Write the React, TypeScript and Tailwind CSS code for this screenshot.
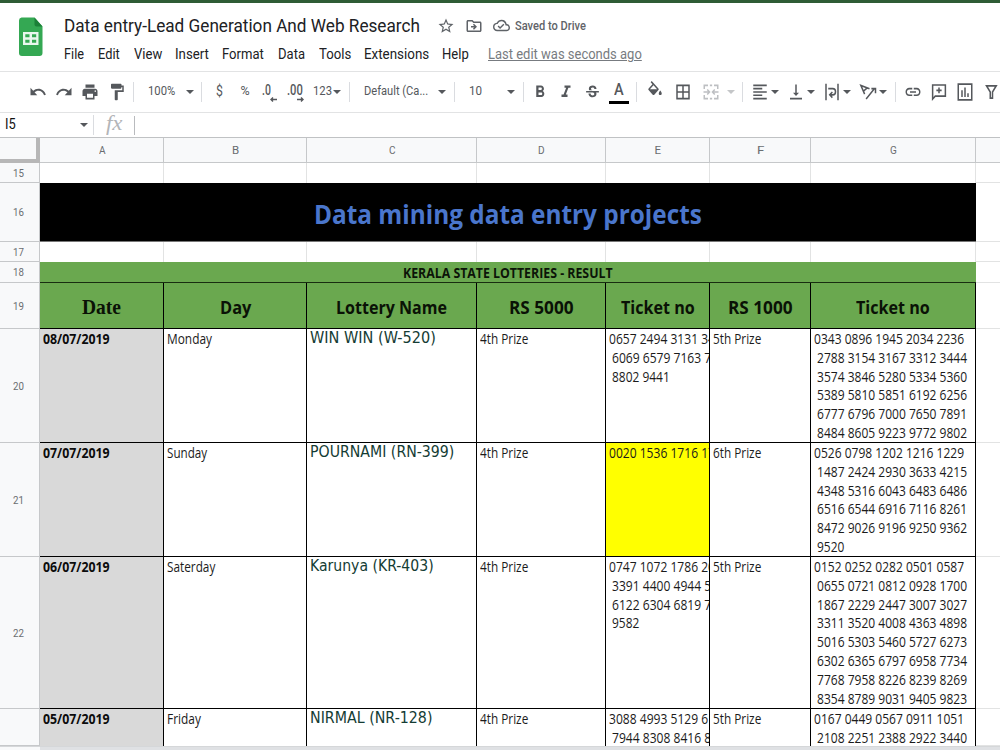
import { useLayoutEffect, useRef, useState, type ReactNode } from "react";
import {
  MdUndo, MdRedo, MdPrint, MdFormatPaint, MdFormatBold, MdFormatItalic, MdStrikethroughS,
  MdBorderAll, MdFormatAlignLeft, MdVerticalAlignBottom, MdInsertLink, MdStarBorder,
  MdOutlineDriveFileMove, MdOutlineCloudDone,
} from "react-icons/md";

/* Text condensed or widened horizontally to an exact width. */
function Fit({ w, children, className = "" }: { w: number; children: string; className?: string }) {
  const ref = useRef<HTMLSpanElement>(null);
  const [k, setK] = useState(1);
  useLayoutEffect(() => {
    if (ref.current) setK(w / ref.current.offsetWidth);
  }, [w, children]);
  return (
    <span className={`block shrink-0 ${className}`} style={{ width: w }}>
      <span ref={ref} className="block w-max origin-left whitespace-pre" style={{ transform: `scaleX(${k})` }}>
        {children}
      </span>
    </span>
  );
}

const Caret = ({ className = "" }: { className?: string }) => (
  <svg viewBox="0 0 8 4" className={`h-[4px] w-[8px] shrink-0 ${className}`} fill="currentColor">
    <path d="M0 0h8L4 4z" />
  </svg>
);
const Sep = ({ className = "" }: { className?: string }) => (
  <span className={`h-5 w-px shrink-0 bg-[#dadce0] ${className}`} />
);
const Ic = ({ className = "", children }: { className?: string; children: ReactNode }) => (
  <span className={`flex h-[18px] w-[18px] shrink-0 scale-y-110 items-center justify-center text-[18px] ${className}`}>
    {children}
  </span>
);
const Draw = ({ d, stroke = false }: { d: string; stroke?: boolean }) => (
  <svg viewBox="0 0 24 24" className="h-[18px] w-[18px]" fill={stroke ? "none" : "currentColor"} stroke={stroke ? "currentColor" : "none"} strokeWidth="2">
    <path d={d} />
  </svg>
);

function TitleBar() {
  const menus: [string, number, string][] = [
    ["File", 20, ""], ["Edit", 22, "ml-[14px]"], ["View", 28, "ml-[14px]"], ["Insert", 34, "ml-[13px]"],
    ["Format", 42, "ml-[13px]"], ["Data", 27, "ml-[14px]"], ["Tools", 32, "ml-[14px]"],
    ["Extensions", 65, "ml-[13px]"], ["Help", 27, "ml-[13px]"],
  ];
  return (
    <header className="flex h-[72px] border-b border-t-[3px] border-b-[#e2e3e4] border-t-[#2f5c35] bg-white">
      <svg viewBox="0 0 25 39" preserveAspectRatio="none" className="ml-[18px] mt-[14px] h-[39px] w-[25px] shrink-0">
        <path d="M3.500 .5h13l8 9v26.500a3 3 0 0 1-3 3H4a3 3 0 0 1-3-3V3.500a3 3 0 0 1 2.500-3z" fill="#34a853" />
        <path d="M16.500.5v7a2 2 0 0 0 2 2h6z" fill="#1b8038" />
        <path fillRule="evenodd" fill="#e9f7ee" d="M5 15h15.500v13H5zM7.300 17.300v3h4.200v-3zM14 17.300v3h4.200v-3zM7.300 22.700v3h4.200v-3zM14 22.700v3h4.200v-3z" />
      </svg>
      <div className="ml-[21px] flex flex-col">
        <div className="flex h-[43px] items-center pt-[2px] text-[#5f6368]">
          <Fit w={356} className="text-[18px] leading-[24px] text-[#202124] [font-family:Roboto,sans-serif]">Data entry-Lead Generation And Web Research</Fit>
          <MdStarBorder className="ml-[17px] h-[18px] w-[18px] shrink-0" />
          <MdOutlineDriveFileMove className="ml-[10px] h-[18px] w-[18px] shrink-0" />
          <MdOutlineCloudDone className="ml-[10px] h-[17px] w-[17px] shrink-0" />
          <Fit w={71} className="ml-[5px] text-[12.500px] font-medium leading-[16px] text-[#5f6368] [font-family:Roboto,sans-serif]">Saved to Drive</Fit>
        </div>
        <div className="flex h-[16px] items-center text-[14px] leading-[16px] text-[#202124] [font-family:Roboto,sans-serif]">
          {menus.map(([t, w, m]) => <Fit key={t} w={w} className={m}>{t}</Fit>)}
          <Fit w={154} className="ml-[19px] text-[#777b80] underline">Last edit was seconds ago</Fit>
        </div>
      </div>
    </header>
  );
}

function Toolbar() {
  return (
    <div className="flex h-[41px] items-center overflow-hidden border-b border-[#e2e3e4] bg-white text-[12.500px] leading-[16px] text-[#55585c] [font-family:Roboto,sans-serif]">
      <Ic className="ml-[29px]"><MdUndo /></Ic>
      <Ic className="ml-[8px]"><MdRedo /></Ic>
      <Ic className="ml-[8px]"><MdPrint /></Ic>
      <Ic className="ml-[9px]"><MdFormatPaint /></Ic>
      <Sep className="ml-[7px]" />
      <Fit w={27} className="ml-[14px] mt-[-2px]">100%</Fit>
      <Caret className="ml-[11px]" />
      <Sep className="ml-[7px]" />
      <Fit w={7} className="ml-[13.500px] mt-[-2px] text-[14px]">$</Fit>
      <Fit w={9} className="ml-[18px] mt-[-2px]">%</Fit>
      <span className="ml-[12.500px] flex h-[18px] w-[15px] shrink-0 flex-col">
        <Fit w={9} className="text-[14px] font-medium leading-[15px]">.0</Fit>
        <svg viewBox="0 0 7 5" className="mt-[-1px] h-[5px] w-[7px] shrink-0 self-end" stroke="currentColor" fill="none"><path d="M7 2.500H1.500M3 .5l-2 2 2 2" strokeWidth="1.400" /></svg>
      </span>
      <span className="ml-[10px] flex h-[18px] w-[17px] shrink-0 flex-col">
        <Fit w={16} className="text-[14px] font-medium leading-[15px]">.00</Fit>
        <svg viewBox="0 0 7 5" className="mt-[-1px] h-[5px] w-[7px] shrink-0 self-end" stroke="currentColor" fill="none"><path d="M0 2.500h5.500M4 .5l2 2-2 2" strokeWidth="1.400" /></svg>
      </span>
      <Fit w={19} className="ml-[9px] mt-[-2px]">123</Fit>
      <Caret className="ml-px" />
      <Sep className="ml-[8px]" />
      <Fit w={64} className="ml-[14px] mt-[-2px]">Default (Ca...</Fit>
      <Caret className="ml-[10px]" />
      <Sep className="ml-[8px]" />
      <Fit w={13} className="ml-[14px] mt-[-2px]">10</Fit>
      <Caret className="ml-[25px]" />
      <Sep className="ml-[8px]" />
      <Ic className="ml-[7px]"><MdFormatBold className="h-[20px] w-[20px]" /></Ic>
      <Ic className="ml-[8px]"><MdFormatItalic className="h-[20px] w-[20px]" /></Ic>
      <Ic className="ml-[8px]"><MdStrikethroughS className="h-[17px] w-[17px]" /></Ic>
      <span className="ml-[8px] flex w-[20px] shrink-0 flex-col items-center border-b-[3px] border-black pb-[2px]">
        <Fit w={10} className="text-[16px] font-medium leading-[18px]">A</Fit>
      </span>
      <Sep className="ml-[7px]" />
      <Ic className="ml-[9px] pb-[2px]"><Draw d="M16.560 8.940L7.620 0 6.210 1.410l2.380 2.380-5.150 5.150c-.59.59-.59 1.540 0 2.120l5.500 5.500c.29.29.68.44 1.060.44s.77-.15 1.060-.44l5.500-5.500c.59-.58.59-1.530 0-2.120zM5.210 10L10 5.210 14.790 10zM19 11.500s-2 2.170-2 3.500c0 1.100.9 2 2 2s2-.9 2-2c0-1.330-2-3.500-2-3.500z" /></Ic>
      <Ic className="ml-[10px]"><MdBorderAll /></Ic>
      <Ic className="ml-[10px] text-[#bdbfc2]"><Draw stroke d="M8 4H3v4.500M3 15.500V20h5M16 4h5v4.500M21 15.500V20h-5M10.500 4h3M10.500 20h3M2 12h7M7 9l3 3-3 3M22 12h-7M17 9l-3 3 3 3" /></Ic>
      <Caret className="ml-[7px] text-[#c4c6c8]" />
      <Sep className="ml-[7px]" />
      <Ic className="ml-[8px]"><MdFormatAlignLeft /></Ic>
      <Caret className="ml-[2px]" />
      <Ic className="ml-[8px]"><MdVerticalAlignBottom /></Ic>
      <Caret className="ml-[2px]" />
      <Ic className="ml-[8px]"><Draw stroke d="M4 2v20M20 2v20M7 8h6a3.700 3.700 0 0 1 0 7.400h-3M12.500 12l-3.500 3.400 3.500 3.400" /></Ic>
      <Caret className="ml-[2px]" />
      <Ic className="ml-[8px]"><Draw stroke d="M7.500 14.500L2.500 4l11.500 4M6 11l5-4M9.500 20.500L21 7.500M16.500 8H22v5.500" /></Ic>
      <Caret className="ml-[2px]" />
      <Sep className="ml-[8px]" />
      <Ic className="ml-[8px]"><MdInsertLink className="h-[20px] w-[20px]" /></Ic>
      <Ic className="ml-[8px]"><Draw stroke d="M3.500 20.500V3.500h17v13.500H7zM12 6.500v7M8.500 10h7" /></Ic>
      <Ic className="ml-[8px]"><Draw stroke d="M3 2.500h18v19H3zM8 10v8M12 6.500V18M16 13.500V18" /></Ic>
      <Ic className="ml-[8px]"><Draw stroke d="M6 4.500h13l-5 7.500v7.500h-3V12z" /></Ic>
    </div>
  );
}

function FormulaBar() {
  return (
    <div className="flex h-[24px] items-center bg-white">
      <Fit w={11} className="ml-[5px] mt-[-2px] text-[14px] leading-[18px] text-[#111] [font-family:Roboto,sans-serif]">I5</Fit>
      <Caret className="ml-[64px] text-[#55585c]" />
      <Sep className="ml-[5px]" />
      <Fit w={16} className="ml-[12px] mt-[-5px] text-[20px] italic leading-[20px] text-[#b3b5b8] [font-family:'Liberation_Serif',serif]">fx</Fit>
      <span className="ml-[12px] h-[19px] w-px bg-[#b9bbbe]" />
    </div>
  );
}

const GRID = "grid grid-cols-[40px_124px_143px_170px_129px_104px_101px_165px_24px] grid-rows-[100%]";
const LINE = "border-r border-b border-black";

function RowHead({ n }: { n: string }) {
  return (
    <div className="flex items-center border-b border-r border-[#c6c8ca] bg-[#f8f9fa] pl-[13px] text-[11.500px] font-normal leading-[14px] text-[#6a6d70] [font-family:Roboto,sans-serif]">
      {n && <Fit w={11}>{n}</Fit>}
    </div>
  );
}

function numWidth(s: string) {
  const spaces = s.split(" ").length - 1;
  return (s.length - spaces) * 6.82 + spaces * 3.5;
}

function Numbers({ lines }: { lines: string[] }) {
  return (
    <>
      {lines.map((l, i) => <Fit key={l} w={numWidth(l)} className={i ? "ml-[3px]" : ""}>{l}</Fit>)}
    </>
  );
}

type Row = {
  n: string; h: string; date: string; day: string; dayW: number; name: string; nameW: number;
  e: string[]; yellow?: boolean; f: string; g: string[]; clip?: boolean;
};

const rows: Row[] = [
  {
    n: "20", h: "h-[114px]", date: "08/07/2019", day: "Monday", dayW: 45, name: "WIN WIN (W-520)", nameW: 126,
    e: ["0657 2494 3131 34", "6069 6579 7163 7", "8802 9441"], f: "5th Prize",
    g: ["0343 0896 1945 2034 2236", "2788 3154 3167 3312 3444", "3574 3846 5280 5334 5360", "5389 5810 5851 6192 6256", "6777 6796 7000 7650 7891", "8484 8605 9223 9772 9802"],
  },
  {
    n: "21", h: "h-[114px]", date: "07/07/2019", day: "Sunday", dayW: 40, name: "POURNAMI (RN-399)", nameW: 144,
    e: ["0020 1536 1716 17"], yellow: true, f: "6th Prize",
    g: ["0526 0798 1202 1216 1229", "1487 2424 2930 3633 4215", "4348 5316 6043 6483 6486", "6516 6544 6916 7116 8261", "8472 9026 9196 9250 9362", "9520"],
  },
  {
    n: "22", h: "h-[152px]", date: "06/07/2019", day: "Saterday", dayW: 48, name: "Karunya (KR-403)", nameW: 124,
    e: ["0747 1072 1786 20", "3391 4400 4944 5", "6122 6304 6819 7", "9582"], f: "5th Prize",
    g: ["0152 0252 0282 0501 0587", "0655 0721 0812 0928 1700", "1867 2229 2447 3007 3027", "3311 3520 4008 4363 4898", "5016 5303 5460 5727 6273", "6302 6365 6797 6958 7734", "7768 7958 8226 8239 8269", "8354 8789 9031 9405 9823"],
  },
  {
    n: "", h: "h-[37px]", date: "05/07/2019", day: "Friday", dayW: 34, name: "NIRMAL (NR-128)", nameW: 122,
    e: ["3088 4993 5129 6", "7944 8308 8416 8"], f: "5th Prize",
    g: ["0167 0449 0567 0911 1051", "2108 2251 2388 2922 3440"], clip: true,
  },
];

function DataRow({ r }: { r: Row }) {
  const line = r.clip ? "border-r border-black" : LINE;
  return (
    <div className={`${GRID} ${r.h} overflow-hidden text-[14px] leading-[18.800px] text-[#1b1b1b] [font-family:'Open_Sans',sans-serif]`}>
      <RowHead n={r.n} />
      <div className={`${line} bg-[#d9d9d9] pl-[3px] pt-px font-bold text-[#0c0c0c]`}><Fit w={67}>{r.date}</Fit></div>
      <div className={`${line} pl-[3px] pt-px`}><Fit w={r.dayW}>{r.day}</Fit></div>
      <div className={`${line} pl-[3px] text-[15.500px] text-[#143c34] [font-family:'DejaVu_Sans',sans-serif]`}><Fit w={r.nameW}>{r.name}</Fit></div>
      <div className={`${line} pl-[3px] pt-px`}><Fit w={48}>4th Prize</Fit></div>
      <div className={`${line} overflow-hidden pl-[3px] pt-px ${r.yellow ? "bg-[#ffff00]" : ""}`}><Numbers lines={r.e} /></div>
      <div className={`${line} pl-[2.500px] pt-px`}><Fit w={48}>{r.f}</Fit></div>
      <div className={`${line} pl-[2.500px] pt-px`}><Numbers lines={r.g} /></div>
      <div className="border-b border-[#e2e3e3]" />
    </div>
  );
}

function EmptyRow({ n }: { n: string }) {
  return (
    <div className={`${GRID} h-[20px]`}>
      <RowHead n={n} />
      {["A", "B", "C", "D", "E", "F", "G"].map((c) => <div key={c} className="border-r border-[#e2e3e3]" />)}
      <div className="border-b border-[#e2e3e3]" />
    </div>
  );
}

const heads: [string, number][] = [["Day", 31], ["Lottery Name", 111], ["RS 5000", 65], ["Ticket no", 74], ["RS 1000", 65], ["Ticket no", 74]];

export default function App() {
  return (
    <div className="flex h-[750px] w-[1000px] flex-col overflow-hidden bg-white">
      <TitleBar />
      <Toolbar />
      <FormulaBar />
      <main className="flex flex-col">
        <div className={`${GRID} h-[26px] border-t border-[#c0c2c4] bg-[#f8f9fa] text-[11.500px] leading-[14px] text-[#6a6d70] [font-family:Roboto,sans-serif]`}>
          <div className="border-b-[4px] border-r-[4px] border-[#b7b7b7]" />
          {["A", "B", "C", "D", "E", "F", "G"].map((c) => (
            <div key={c} className="flex items-center justify-center border-b border-r border-[#c6c8ca] pl-px"><Fit w={7}>{c}</Fit></div>
          ))}
          <div className="border-b border-[#c6c8ca]" />
        </div>
        <EmptyRow n="15" />
        <div className={`${GRID} h-[59px]`}>
          <RowHead n="16" />
          <div className="col-span-7 flex items-center justify-center border-b border-[#777] bg-black pr-px pt-[3px] text-[27px] font-bold leading-[34px] text-[#4a76cc] [font-family:'Open_Sans',sans-serif]">
            <Fit w={388}>Data mining data entry projects</Fit>
          </div>
          <div className="border-b border-[#e2e3e3]" />
        </div>
        <EmptyRow n="17" />
        <div className={`${GRID} h-[21px]`}>
          <RowHead n="18" />
          <div className="col-span-7 flex items-center justify-center border-b border-[#182d10] bg-[#6aa84f] pt-px text-[13.500px] font-bold leading-[18px] text-[#0c1408] [font-family:'Open_Sans',sans-serif]">
            <Fit w={210}>KERALA STATE LOTTERIES - RESULT</Fit>
          </div>
          <div className="border-b border-[#e2e3e3]" />
        </div>
        <div className={`${GRID} h-[46px] text-[18.500px] font-bold leading-[24px] text-[#0a1206] [font-family:'Open_Sans',sans-serif]`}>
          <RowHead n="19" />
          <div className={`${LINE} flex items-center justify-center bg-[#6aa84f] pt-[3px] text-[22px] [font-family:'Liberation_Serif',serif]`}><Fit w={39}>Date</Fit></div>
          {heads.map(([t, w], i) => (
            <div key={i} className={`${LINE} flex items-center justify-center bg-[#6aa84f] pt-[2px]`}><Fit w={w}>{t}</Fit></div>
          ))}
          <div className="border-b border-[#e2e3e3]" />
        </div>
        {rows.map((r) => <DataRow key={r.date} r={r} />)}
      </main>
      <footer className="flex h-[4px] border-t border-[#d5d7d9] bg-[#f8f9fa]">
        <span className="ml-[40px] h-[3px] flex-1 bg-[#dfe1e4]" />
      </footer>
    </div>
  );
}
